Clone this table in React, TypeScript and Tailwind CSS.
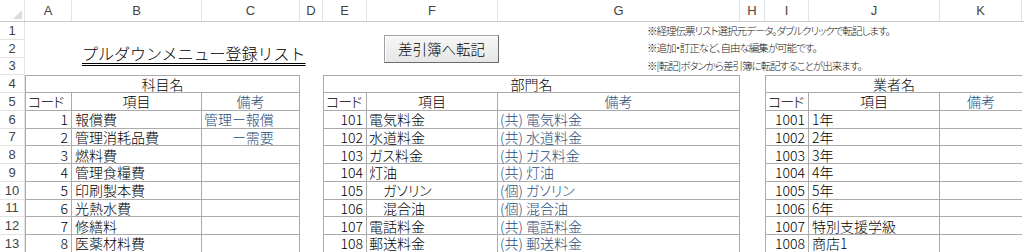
import React from 'react';

const COLS = 'grid-cols-[25px_47px_130px_98px_23px_44px_131px_242px_25px_44px_131px_82px_40px]';
const JP = "font-['Noto_Sans_CJK_JP',sans-serif]";
const TB = 'border-r border-b border-[#ababab]';
const BLUE = 'text-[#234d7c]';

const letters = ['A', 'B', 'C', 'D', 'E', 'F', 'G', 'H', 'I', 'J', 'K', 'L'];

const kamoku = [
  ['1', '報償費', '管理ー報償'],
  ['2', '管理消耗品費', '　　ー需要'],
  ['3', '燃料費', ''],
  ['4', '管理食糧費', ''],
  ['5', '印刷製本費', ''],
  ['6', '光熱水費', ''],
  ['7', '修繕料', ''],
  ['8', '医薬材料費', ''],
];

const bumon = [
  ['101', '電気料金', '(共) 電気料金'],
  ['102', '水道料金', '(共) 水道料金'],
  ['103', 'ガス料金', '(共) ガス料金'],
  ['104', '灯油', '(共) 灯油'],
  ['105', '　ガソリン', '(個) ガソリン'],
  ['106', '　混合油', '(個) 混合油'],
  ['107', '電話料金', '(共) 電話料金'],
  ['108', '郵送料金', '(共) 郵送料金'],
];

const gyosha = [
  ['1001', '1年'],
  ['1002', '2年'],
  ['1003', '3年'],
  ['1004', '4年'],
  ['1005', '5年'],
  ['1006', '6年'],
  ['1007', '特別支援学級'],
  ['1008', '商店1'],
];

function C({ className = '', children }: { className?: string; children?: React.ReactNode }) {
  return (
    <div className={`flex items-center whitespace-pre leading-none text-[14px] ${className}`}>
      {children}
    </div>
  );
}

function SheetRow({ n, children }: { n: number; children: React.ReactNode }) {
  return (
    <div className={`grid ${COLS} h-[17.75px]`}>
      <div className="flex items-center justify-center border-r border-b border-[#e3e3e3] text-[13px] leading-none text-[#444] font-['Liberation_Sans',sans-serif]">
        {n}
      </div>
      {children}
    </div>
  );
}

function Note({ children }: { children: React.ReactNode }) {
  return (
    <div className="col-span-6 flex items-center whitespace-nowrap pl-[149px] text-[10.5px] leading-none tracking-[-1px] text-[#222]">
      {children}
    </div>
  );
}

export default function App() {
  return (
    <div
      className={`relative w-[1024px] h-[252px] overflow-hidden bg-white text-black font-light [font-feature-settings:"palt"] ${JP}`}
    >
      {/* column headers */}
      <div className={`grid ${COLS} h-[22px] border-b border-[#c9c9c9]`}>
        <div className="relative border-r border-[#e3e3e3]">
          <svg className="absolute left-0 top-0" width="25" height="22">
            <polygon points="22,10 22,19 13,19" fill="#dcdcdc" />
          </svg>
        </div>
        {letters.map((l) => (
          <div
            key={l}
            className="flex items-center justify-center border-r border-[#e3e3e3] text-[13px] font-normal text-[#444] font-['Liberation_Sans',sans-serif]"
          >
            {l}
          </div>
        ))}
      </div>

      <SheetRow n={1}>
        <C /><C /><C /><C /><C /><C />
        <Note>※経理伝票リスト選択元データ。ダブルクリックで転記します。</Note>
      </SheetRow>
      <SheetRow n={2}>
        <C />
        <div className="col-span-3 relative">
          <span className="absolute left-[10px] top-[5px] whitespace-nowrap text-[16px] leading-none underline decoration-double decoration-1 underline-offset-[3px] [font-feature-settings:normal]">
            プルダウンメニュー登録リスト
          </span>
        </div>
        <C /><C />
        <Note>※追加・訂正など、自由な編集が可能です。</Note>
      </SheetRow>
      <SheetRow n={3}>
        <C /><C /><C /><C /><C /><C />
        <Note>※[転記]ボタンから差引簿に転記することが出来ます。</Note>
      </SheetRow>

      <SheetRow n={4}>
        <C className={`col-span-3 justify-center border-l border-t ${TB}`}>科目名</C>
        <C />
        <C className={`col-span-3 justify-center border-l border-t ${TB}`}>部門名</C>
        <C />
        <C className="col-span-3 justify-center border-l border-t border-b border-[#ababab]">業者名</C>
        <C />
      </SheetRow>
      <SheetRow n={5}>
        <C className={`border-l pl-[2px] tracking-[-1px] ${TB}`}>コード</C>
        <C className={`justify-center ${TB}`}>項目</C>
        <C className={`justify-center ${TB} ${BLUE}`}>備考</C>
        <C />
        <C className={`border-l pl-[2px] tracking-[-1px] ${TB}`}>コード</C>
        <C className={`justify-center ${TB}`}>項目</C>
        <C className={`justify-center ${TB} ${BLUE}`}>備考</C>
        <C />
        <C className={`border-l pl-[2px] tracking-[-1px] ${TB}`}>コード</C>
        <C className={`justify-center ${TB}`}>項目</C>
        <C className={`justify-center border-b border-[#ababab] ${BLUE}`}>備考</C>
        <C />
      </SheetRow>

      {kamoku.map((k, i) => (
        <SheetRow key={i} n={i + 6}>
          <C className={`border-l justify-end pr-[3px] ${TB}`}>{k[0]}</C>
          <C className={`pl-[3px] ${TB}`}>{k[1]}</C>
          <C className={`pl-[2px] ${TB} ${BLUE}`}>{k[2]}</C>
          <C />
          <C className={`border-l justify-end pr-[3px] ${TB}`}>{bumon[i][0]}</C>
          <C className={`pl-[2px] ${TB}`}>{bumon[i][1]}</C>
          <C className={`pl-[2px] ${TB} ${BLUE}`}>{bumon[i][2]}</C>
          <C />
          <C className={`border-l justify-end pr-[3px] ${TB}`}>{gyosha[i][0]}</C>
          <C className={`pl-[3px] ${TB}`}>{gyosha[i][1]}</C>
          <C className="border-b border-[#ababab]" />
          <C />
        </SheetRow>
      ))}

      {/* macro button */}
      <button className="absolute left-[384px] top-[35px] flex h-[28px] w-[115px] items-center justify-center border border-[#a0a0a0] border-r-[#6b6b6b] border-b-[#6b6b6b] bg-gradient-to-b from-[#f7f7f7] to-[#e6e6e6] text-[14.5px] leading-none shadow-[inset_1px_1px_0_#ffffff] [font-feature-settings:normal]">
        差引簿へ転記
      </button>
    </div>
  );
}
